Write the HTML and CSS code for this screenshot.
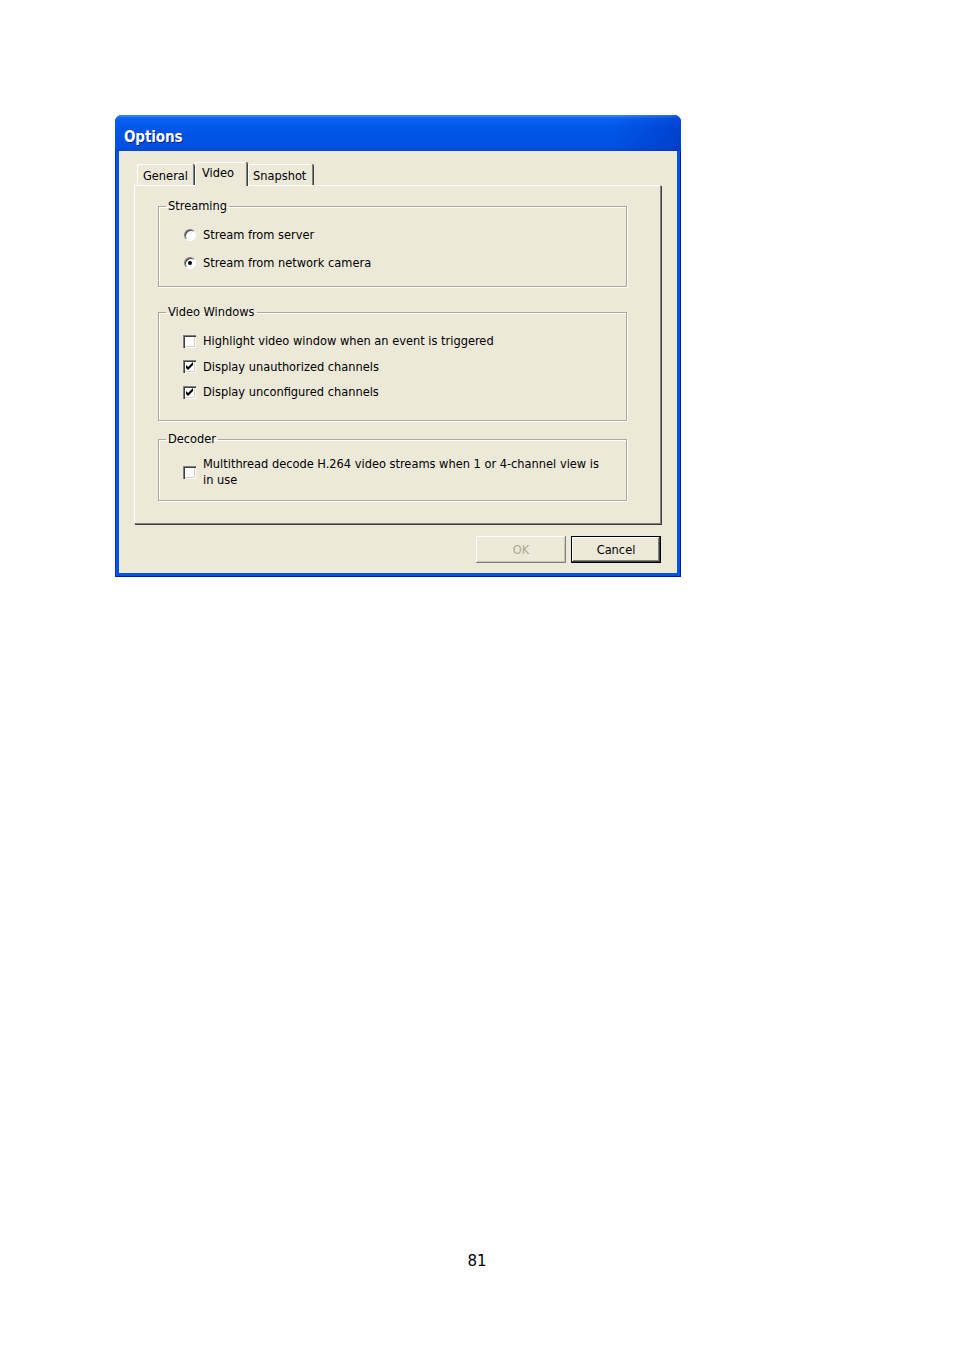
FILE: index.html
```html
<!DOCTYPE html>
<html>
<head>
<meta charset="utf-8">
<title>Options</title>
<link rel="stylesheet" href="styles.css">
</head>
<body>
<div class="page">
  <div class="window">
    <div class="titlebar"><span class="title">Options</span></div>
    <div class="client">
      <div class="tabs">
        <div class="tab t-general">General</div>
        <div class="tab selected">Video</div>
        <div class="tab t-snap">Snapshot</div>
      </div>
      <div class="panel">
        <fieldset class="group g-stream">
          <legend>Streaming</legend>
          <div class="rows rows-radio">
            <div class="row"><span class="radio"></span><span class="lbl">Stream from server</span></div>
            <div class="row"><span class="radio on"></span><span class="lbl">Stream from network camera</span></div>
          </div>
        </fieldset>
        <fieldset class="group g-video">
          <legend>Video Windows</legend>
          <div class="rows rows-check">
            <div class="row"><span class="check"></span><span class="lbl">Highlight video window when an event is triggered</span></div>
            <div class="row"><span class="check"><svg viewBox="0 0 13 13" width="13" height="13"><path d="M3 5 L5 7 L10 2 L10 5 L5 10 L3 8 Z" fill="#000"/></svg></span><span class="lbl">Display unauthorized channels</span></div>
            <div class="row"><span class="check"><svg viewBox="0 0 13 13" width="13" height="13"><path d="M3 5 L5 7 L10 2 L10 5 L5 10 L3 8 Z" fill="#000"/></svg></span><span class="lbl">Display unconfigured channels</span></div>
          </div>
        </fieldset>
        <fieldset class="group g-decoder">
          <legend>Decoder</legend>
          <div class="rows">
            <div class="row multi"><span class="check"></span><span class="lbl">Multithread decode H.264 video streams when 1 or 4-channel view is<br>in use</span></div>
          </div>
        </fieldset>
      </div>
      <div class="buttons">
        <button class="btn disabled">OK</button>
        <button class="btn default">Cancel</button>
      </div>
    </div>
  </div>
  <div class="pagenum">81</div>
</div>
</body>
</html>
```

FILE: styles.css
```css
html, body {
  margin: 0;
  padding: 0;
  background: #ffffff;
}

.page {
  padding: 115px 0 0 115px;
  height: 1235px;
}

.window {
  width: 558px;
  background: #0054e3;
  border-radius: 7px 7px 0 0;
  padding: 0 4px 4px 4px;
  box-shadow: inset 1px 0 0 #0831d9, inset -1px 0 0 #001ea0, inset 0 -1px 0 #001ea0;
}

.titlebar {
  height: 36px;
  box-sizing: border-box;
  margin: 0 -4px;
  padding: 8px 0 0 9px;
  border-radius: 7px 7px 0 0;
  background:
    linear-gradient(90deg, rgba(0,0,0,0) 88%, rgba(0,30,160,0.35) 100%),
    linear-gradient(180deg, #3d8dff 0%, #0a61f5 10%, #0057e8 35%, #0053e3 70%, #0050df 90%, #0046d0 100%);
  display: flex;
  align-items: center;
}

.title {
  font-family: "DejaVu Sans", sans-serif;
  font-stretch: condensed;
  font-weight: bold;
  font-size: 15px;
  color: #ffffff;
  text-shadow: 1px 1px 0 #0a1e8c;
  letter-spacing: -0.1px;
}

.client {
  background: #ece9d8;
  height: 422px;
  box-sizing: border-box;
  padding: 11px 16px 10px 15px;
  font-family: "DejaVu Sans", sans-serif;
  font-stretch: condensed;
  font-size: 12.7px;
  color: #000;
}

.tabs {
  display: flex;
  align-items: flex-end;
  height: 23px;
  padding-left: 3px;
}

.tab {
  height: 20px;
  line-height: 21px;
  border-top: 1px solid #ffffff;
  border-left: 1px solid #ffffff;
  border-right: 1px solid #808080;
  border-radius: 2px 2px 0 0;
  box-shadow: 1px 0 0 #404040;
  background: #ece9d8;
  box-sizing: content-box;
}

.t-general { padding: 0 5px 0 5px; }
.t-snap { padding: 0 6px 0 4px; }

.tab.selected {
  height: 23px;
  line-height: 19px;
  padding: 0 12px 0 6px;
  position: relative;
  z-index: 1;
  margin-bottom: -1px;
}

.tab + .tab { margin-left: 1px; }

.panel {
  height: 339px;
  box-sizing: border-box;
  border-top: 1px solid #ffffff;
  border-left: 1px solid #ffffff;
  border-right: 1px solid #808080;
  border-bottom: 1px solid #808080;
  box-shadow: 1px 1px 0 #404040;
  padding: 13px 33px 0 23px;
}

.group {
  margin: 0;
  min-inline-size: 0;
  border: 1px solid #aca899;
  box-shadow: 1px 1px 0 #ffffff, inset 1px 1px 0 #ffffff;
  padding: 0;
}

.group legend {
  padding: 0 2px;
  margin-left: 7px;
  line-height: 14px;
}

.g-stream { padding-top: 15px; padding-bottom: 16px; }
.g-video { margin-top: 18px; padding-top: 15px; padding-bottom: 21px; }
.g-decoder { margin-top: 11px; padding-top: 10px; padding-bottom: 12px; }

.rows { display: flex; flex-direction: column; padding-left: 24px; }
.rows-radio { gap: 14px; }
.rows-check { gap: 11.5px; }

.row {
  display: flex;
  align-items: center;
  height: 14px;
  line-height: 14px;
}

.row.multi {
  height: auto;
  line-height: 16px;
}

.lbl { margin-left: 7px; white-space: nowrap; }

.check {
  width: 13px;
  height: 13px;
  flex: none;
  box-sizing: border-box;
  background: #ffffff;
  box-shadow: inset 1px 1px 0 #808080, inset 2px 2px 0 #404040, inset -1px -1px 0 #ffffff, inset -2px -2px 0 #d4d0c8;
  display: flex;
}

.check svg { display: block; }

.radio {
  width: 12px;
  height: 12px;
  flex: none;
  box-sizing: border-box;
  border-radius: 50%;
  border: 1px solid;
  border-color: #808080 #ffffff #ffffff #808080;
  background: #ffffff;
  box-shadow: inset 1px 1px 0 #404040;
  display: flex;
  align-items: center;
  justify-content: center;
  margin-left: 1px;
}

.radio.on::after {
  content: "";
  width: 4px;
  height: 4px;
  border-radius: 50%;
  background: #000;
}

.buttons {
  display: flex;
  justify-content: flex-end;
  gap: 5px;
  margin-top: 12px;
}

.btn {
  width: 90px;
  height: 27px;
  font-family: "DejaVu Sans", sans-serif;
  font-stretch: condensed;
  font-size: 12.7px;
  background: #ece9d8;
  border: none;
  padding: 0;
  color: #000;
  box-shadow: inset -1px -1px 0 #404040, inset 1px 1px 0 #ffffff, inset -2px -2px 0 #808080;
}

.btn.disabled {
  color: #aca899;
  box-shadow: inset -1px -1px 0 #808080, inset 1px 1px 0 #ffffff, inset -2px -2px 0 #c8c5b5;
}

.btn.default {
  border: 1px solid #000;
}

.pagenum {
  text-align: center;
  font-family: "DejaVu Sans", sans-serif;
  font-size: 15px;
  margin-top: 675px;
  margin-left: -115px;
  line-height: 18px;
}
```
